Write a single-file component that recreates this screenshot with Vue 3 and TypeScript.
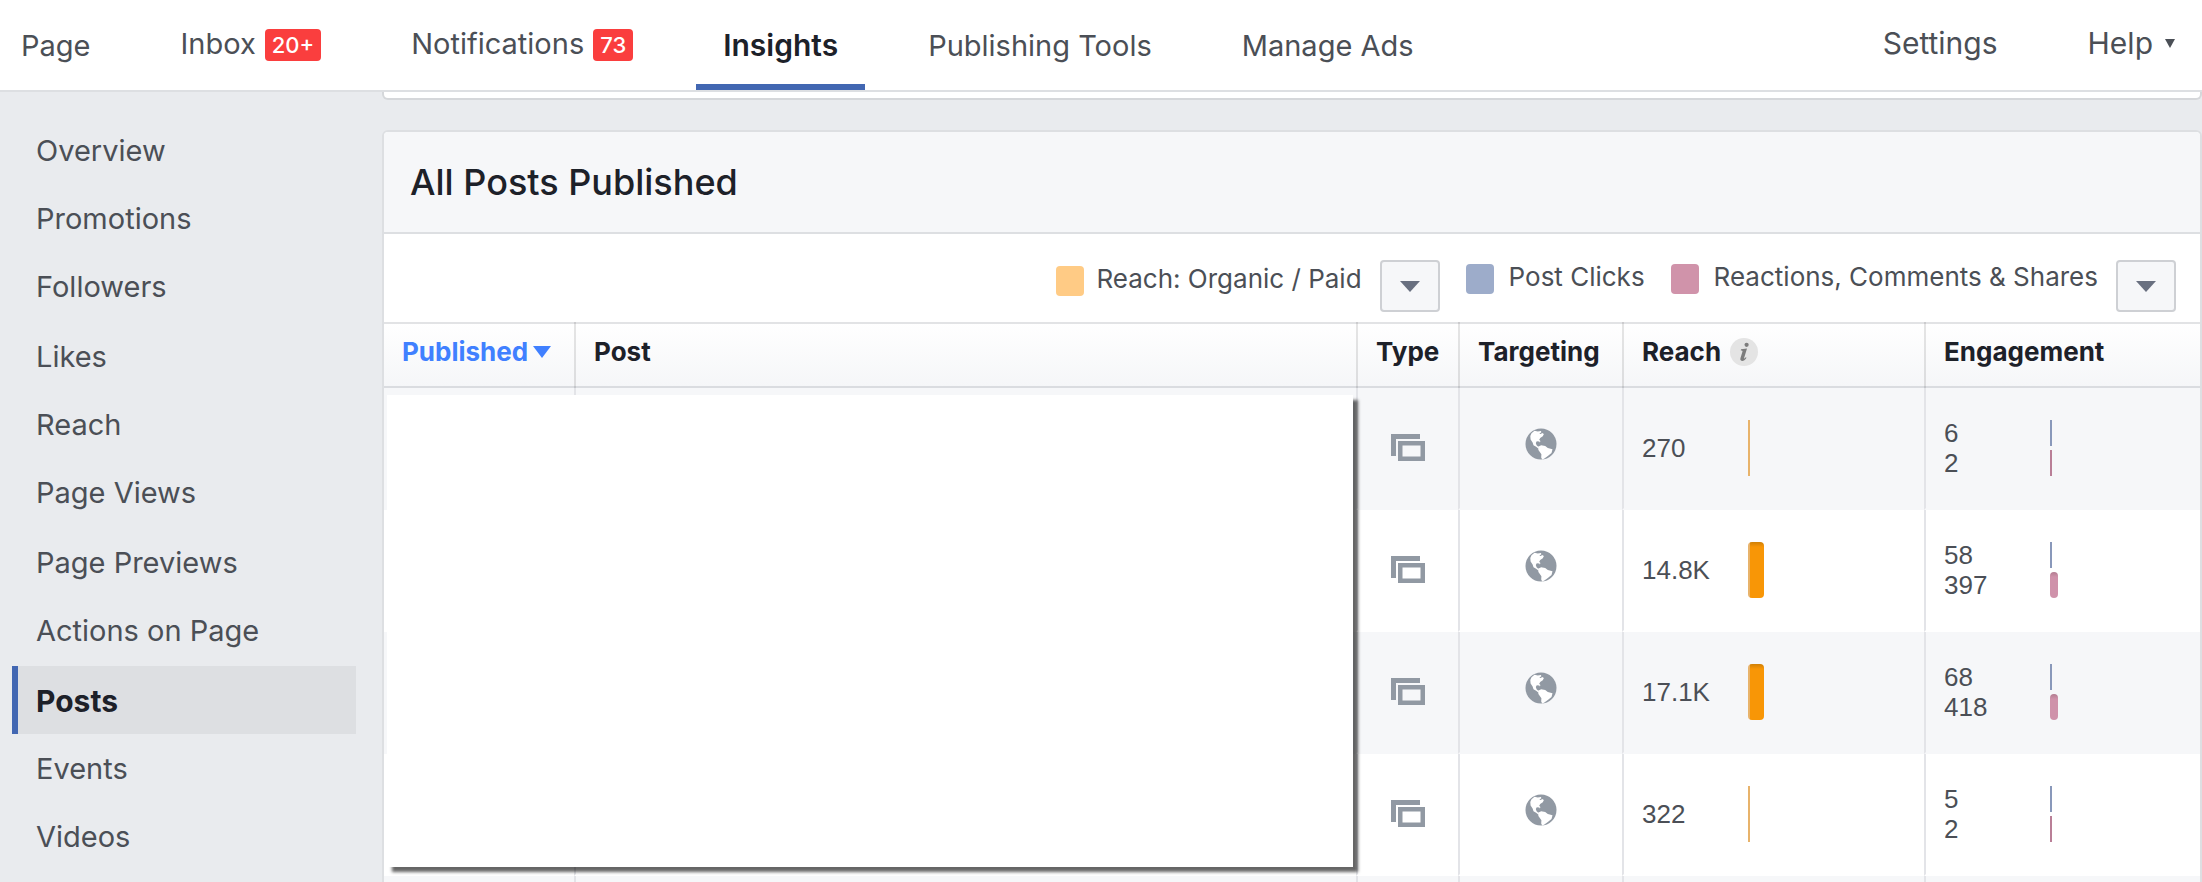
<script setup lang="ts">
interface Tab { label: string; badge?: string; active?: boolean }
interface Post { id: number; reach: string; organic: number; paid: number; clicks: string; clicksBar: number; reactions: string; reactionsBar: number }

const tabs: Tab[] = [
  { label: 'Page' },
  { label: 'Inbox', badge: '20+' },
  { label: 'Notifications', badge: '73' },
  { label: 'Insights', active: true },
  { label: 'Publishing Tools' },
  { label: 'Manage Ads' },
]

const sections: string[] = [
  'Overview', 'Promotions', 'Followers', 'Likes', 'Reach', 'Page Views',
  'Page Previews', 'Actions on Page', 'Posts', 'Events', 'Videos',
]
const current = 'Posts'

const posts: Post[] = [
  { id: 1, reach: '270', organic: 2, paid: 0, clicks: '6', clicksBar: 2, reactions: '2', reactionsBar: 2 },
  { id: 2, reach: '14.8K', organic: 2, paid: 14, clicks: '58', clicksBar: 2, reactions: '397', reactionsBar: 8 },
  { id: 3, reach: '17.1K', organic: 2, paid: 14, clicks: '68', clicksBar: 2, reactions: '418', reactionsBar: 8 },
  { id: 4, reach: '322', organic: 2, paid: 0, clicks: '5', clicksBar: 2, reactions: '2', reactionsBar: 2 },
  { id: 5, reach: '', organic: 0, paid: 0, clicks: '', clicksBar: 0, reactions: '', reactionsBar: 0 },
]
</script>

<template>
  <div class="page">
    <header class="topbar">
      <nav class="tabs" aria-label="Page sections">
        <a v-for="tab in tabs" :key="tab.label" href="#" class="tab" :class="{ active: tab.active, badged: tab.badge }">
          <span>{{ tab.label }}</span>
          <span v-if="tab.badge" class="badge">{{ tab.badge }}</span>
        </a>
      </nav>
      <div class="tools">
        <a href="#" class="tab badged">Settings</a>
        <button type="button" class="tab badged help">
          Help
          <svg width="10" height="9" viewBox="0 0 10 9" aria-hidden="true"><path d="M0 0h10L5 9z" fill="#4b4f56" /></svg>
        </button>
      </div>
    </header>

    <div class="body">
      <nav class="sidebar" aria-label="Insights">
        <ul>
          <li v-for="name in sections" :key="name">
            <a href="#" :class="{ current: name === current }">{{ name }}</a>
          </li>
        </ul>
      </nav>

      <main>
        <div class="card stub"></div>
        <section class="card posts">
          <h2>All Posts Published</h2>

          <div class="legend">
            <span class="key low"><i class="swatch reach"></i>Reach: Organic / Paid</span>
            <button type="button" class="menu" aria-label="Choose reach metric">
              <svg width="20" height="11" viewBox="0 0 20 11" aria-hidden="true"><path d="M0 0h20L10 11z" fill="#697080" /></svg>
            </button>
            <span class="key clicks-key"><i class="swatch clicks"></i>Post Clicks</span>
            <span class="key reactions-key"><i class="swatch reactions"></i>Reactions, Comments &amp; Shares</span>
            <button type="button" class="menu" aria-label="Choose engagement metric">
              <svg width="20" height="11" viewBox="0 0 20 11" aria-hidden="true"><path d="M0 0h20L10 11z" fill="#697080" /></svg>
            </button>
          </div>

          <div class="table-wrap">
            <table>
              <colgroup>
                <col class="c-published"><col><col class="c-type"><col class="c-targeting"><col class="c-reach"><col class="c-engagement">
              </colgroup>
              <thead>
                <tr>
                  <th scope="col" aria-sort="descending">
                    <button type="button" class="sort">
                      Published
                      <svg width="18" height="12" viewBox="0 0 18 12" aria-hidden="true"><path d="M0 0h18L9 12z" fill="#4080ff" /></svg>
                    </button>
                  </th>
                  <th scope="col">Post</th>
                  <th scope="col">Type</th>
                  <th scope="col">Targeting</th>
                  <th scope="col">
                    <span class="with-info">Reach
                      <svg width="28" height="28" viewBox="0 0 28 28" aria-hidden="true">
                        <circle cx="14" cy="14" r="14" fill="#e4e4e4" />
                        <circle cx="16.6" cy="6.8" r="2.1" fill="#7c7c7c" />
                        <path d="M11 11.3l6-.9-2.900 9.600c-.2.8.3.8 1.700-.7l.7.5c-1.500 2.300-3 3.200-4.500 3.100-1.500-.1-2-1.100-1.500-2.800l2-6.600c.2-.8-.2-1.100-1.700-1.100z" fill="#7c7c7c" />
                      </svg>
                    </span>
                  </th>
                  <th scope="col">Engagement</th>
                </tr>
              </thead>
              <tbody>
                <tr v-for="post in posts" :key="post.id">
                  <td></td>
                  <td></td>
                  <td class="icon">
                    <svg v-if="post.reach" width="34" height="28" viewBox="0 0 34 28" role="img" aria-label="Shared post">
                      <path d="M0 0h29v5H5v17H0z" fill="#9199a3" />
                      <path d="M7 7h27v20H7zM11.500 11.500v11h18v-11z" fill="#9199a3" fill-rule="evenodd" />
                    </svg>
                  </td>
                  <td class="icon globe">
                    <svg v-if="post.reach" width="32" height="32" viewBox="0 0 32 32" role="img" aria-label="Public">
                      <circle cx="16" cy="16" r="15.500" fill="#9199a3" />
                      <path class="land" d="M9.500 2.800L6.500 5.200 5.300 8l.3 3.500 2 3 .9 2.800 2.600 1.400 1.900 1.500.6-1.100-2-1.900-.8-2.300 1-1.600 2.500.1.600 1.200.5-1.500-1.200-1.400 1-1.800 2.600-1.700 1.100-2.100-1.700-1-1.400.9-1.500-.2 2-1.500-.3-1.200-3.200.5z" />
                      <path class="land" d="M13 18.700l3.200-1.400 4 .7 2.600 1.900 4.700 1.400-1 3.600-4 3.300-3.500 2.500-1.800.9-1-2 .2-3.300-3-4.200z" />
                    </svg>
                  </td>
                  <td class="metric">
                    <div v-if="post.reach" class="row">
                      <span class="num">{{ post.reach }}</span>
                      <span class="bar tall" :class="{ rounded: post.paid > 0 }">
                        <i class="organic" :style="{ width: post.organic + 'px' }"></i>
                        <i class="paid" :style="{ width: post.paid + 'px' }"></i>
                      </span>
                    </div>
                  </td>
                  <td class="metric">
                    <template v-if="post.reach">
                      <div class="row">
                        <span class="num">{{ post.clicks }}</span>
                        <span class="bar"><i class="clicks-bar" :style="{ width: post.clicksBar + 'px' }"></i></span>
                      </div>
                      <div class="row">
                        <span class="num">{{ post.reactions }}</span>
                        <span class="bar"><i class="reactions-bar" :class="{ wide: post.reactionsBar > 2 }" :style="{ width: post.reactionsBar + 'px' }"></i></span>
                      </div>
                    </template>
                  </td>
                </tr>
              </tbody>
            </table>
            <div class="cover"></div>
          </div>
        </section>
      </main>
    </div>
  </div>
</template>

<style>
body {
  margin: 0;
  background: #e9ebee;
}
</style>

<style scoped>
* {
  box-sizing: border-box;
}
.page {
  height: 100vh;
  overflow: hidden;
  display: flex;
  flex-direction: column;
  font-family: Inter, "Liberation Sans", sans-serif;
  font-size: 29px;
  color: #4b4f56;
}
a {
  color: inherit;
  text-decoration: none;
}
button {
  font: inherit;
  color: inherit;
  border: 0;
  padding: 0;
  background: none;
}
.topbar {
  flex: none;
  height: 92px;
  display: flex;
  justify-content: space-between;
  background: #fff;
  border-bottom: 2px solid #dddfe2;
}
.tabs,
.tools {
  display: flex;
  gap: 36px;
}
.tools {
  font-size: 30px;
}
.tab {
  display: flex;
  align-items: center;
  gap: 9px;
  padding: 6px 27px 6px;
  white-space: nowrap;
}
.tab:first-child {
  padding-left: 21px;
}
.tab.badged {
  padding-bottom: 10px;
}
.tab.active {
  color: #1d2129;
  font-size: 30px;
  font-weight: 600;
  padding-bottom: 0;
  border-bottom: 6px solid #4267b2;
}
.badge {
  height: 32px;
  margin-top: 4px;
  padding: 0 7px;
  border-radius: 4px;
  background: #fa3e3e;
  color: #fff;
  font-size: 22px;
  line-height: 32px;
  font-weight: 500;
}
.help {
  gap: 12px;
}
.body {
  flex: 1;
  min-height: 0;
  display: flex;
}
.sidebar {
  flex: none;
  width: 382px;
  padding: 24px 26px 0 12px;
}
.sidebar ul {
  list-style: none;
  margin: 0;
  padding: 0;
}
.sidebar li:nth-child(3),
.sidebar li:nth-child(6),
.sidebar li:nth-child(8) {
  margin-bottom: 2px;
}
.sidebar a {
  display: block;
  height: 68px;
  padding-left: 18px;
  border-left: 6px solid transparent;
  line-height: 70px;
}
.sidebar a.current {
  border-left-color: #4267b2;
  background: #dddfe2;
  color: #1d2129;
  font-size: 30px;
  font-weight: 700;
}
main {
  flex: 1;
  min-width: 0;
}
.card {
  border: 2px solid #dddfe2;
  background: #fff;
}
.stub {
  height: 8px;
  border-top: 0;
  border-color: #d5d7da;
  border-radius: 0 0 6px 6px;
}
.posts {
  margin-top: 30px;
  border-radius: 6px 6px 0 0;
}
h2 {
  margin: 0;
  height: 102px;
  padding-left: 26px;
  border-bottom: 2px solid #dddfe2;
  border-radius: 4px 4px 0 0;
  background: #f6f7f9;
  color: #1d2129;
  font-size: 36px;
  font-weight: 500;
  line-height: 100px;
}
.legend {
  height: 88px;
  padding: 26px 24px 0 0;
  display: flex;
  justify-content: flex-end;
  font-size: 26px;
}
.key {
  display: flex;
  gap: 15px;
  margin-top: 4px;
  line-height: 26px;
}
.key.low {
  gap: 12px;
  margin-top: 6px;
}
.swatch {
  width: 28px;
  height: 30px;
  border-radius: 4px;
}
.swatch.reach {
  background: #ffcb85;
}
.swatch.clicks {
  background: #9dacca;
}
.swatch.reactions {
  background: #d093aa;
}
.menu {
  width: 60px;
  height: 52px;
  margin-left: 18px;
  border: 2px solid #ced0d4;
  border-radius: 4px;
  background: #f6f7f9;
  display: flex;
  align-items: center;
  justify-content: center;
}
.clicks-key,
.reactions-key {
  margin-left: 26px;
}
.table-wrap {
  position: relative;
}
table {
  width: 100%;
  table-layout: fixed;
  border-collapse: separate;
  border-spacing: 0;
  font-size: 26px;
}
.c-published {
  width: 190px;
}
.c-type {
  width: 102px;
}
.c-targeting {
  width: 164px;
}
.c-reach {
  width: 302px;
}
.c-engagement {
  width: 276px;
}
th {
  height: 66px;
  padding: 0 0 6px 18px;
  text-align: left;
  white-space: nowrap;
  color: #1d2129;
  font-weight: 700;
  font-size: 26px;
  line-height: 30px;
  border-left: 2px solid rgba(0, 0, 0, 0.1);
  background:
    linear-gradient(#e2e3e5, #e2e3e5) top / 100% 2px no-repeat border-box,
    linear-gradient(#dadce0, #dadce0) bottom / 100% 2px no-repeat border-box,
    linear-gradient(#fff, #f5f6f8) border-box;
}
th:first-child,
td:first-child {
  border-left: 0;
}
.sort {
  display: flex;
  align-items: center;
  gap: 5px;
  color: #4080ff;
}
.with-info {
  display: flex;
  align-items: center;
  gap: 9px;
}
td {
  height: 122px;
  padding: 0;
  border-left: 2px solid #e3e4e8;
  border-bottom: 2px solid #fff;
}
tbody tr:nth-child(odd) td {
  background: #f6f7f9;
  border-bottom-color: #f6f7f9;
}
tbody tr:nth-child(even) td {
  background: #fff;
}
.icon {
  text-align: center;
}
.icon svg {
  display: block;
  margin: 0 auto;
}
.globe svg {
  margin-top: -8px;
}
.land {
  fill: #fff;
}
.metric {
  padding-left: 18px;
  font-family: "Liberation Sans", Arial, sans-serif;
}
.row {
  display: flex;
  align-items: center;
  height: 30px;
}
.num {
  width: 106px;
}
.bar {
  display: flex;
  height: 26px;
}
.bar.tall {
  height: 56px;
}
.bar.rounded {
  overflow: hidden;
  border-radius: 4px;
}
.organic {
  background: #e8b36b;
}
.paid {
  background: linear-gradient(#d08006, #f89606 5px);
}
.clicks-bar {
  background: #8998ba;
}
.reactions-bar {
  background: #b97f97;
}
.reactions-bar.wide {
  border-radius: 4px;
  background: linear-gradient(#b27c90, #cf92aa 5px);
}
/* Blank sheet laid over the dates and post previews. */
.cover {
  position: absolute;
  top: 73px;
  left: 3px;
  right: 847px;
  height: 472px;
  background: #fff;
  box-shadow: 5px 5px 3px rgba(0, 0, 0, 0.6);
}
</style>
